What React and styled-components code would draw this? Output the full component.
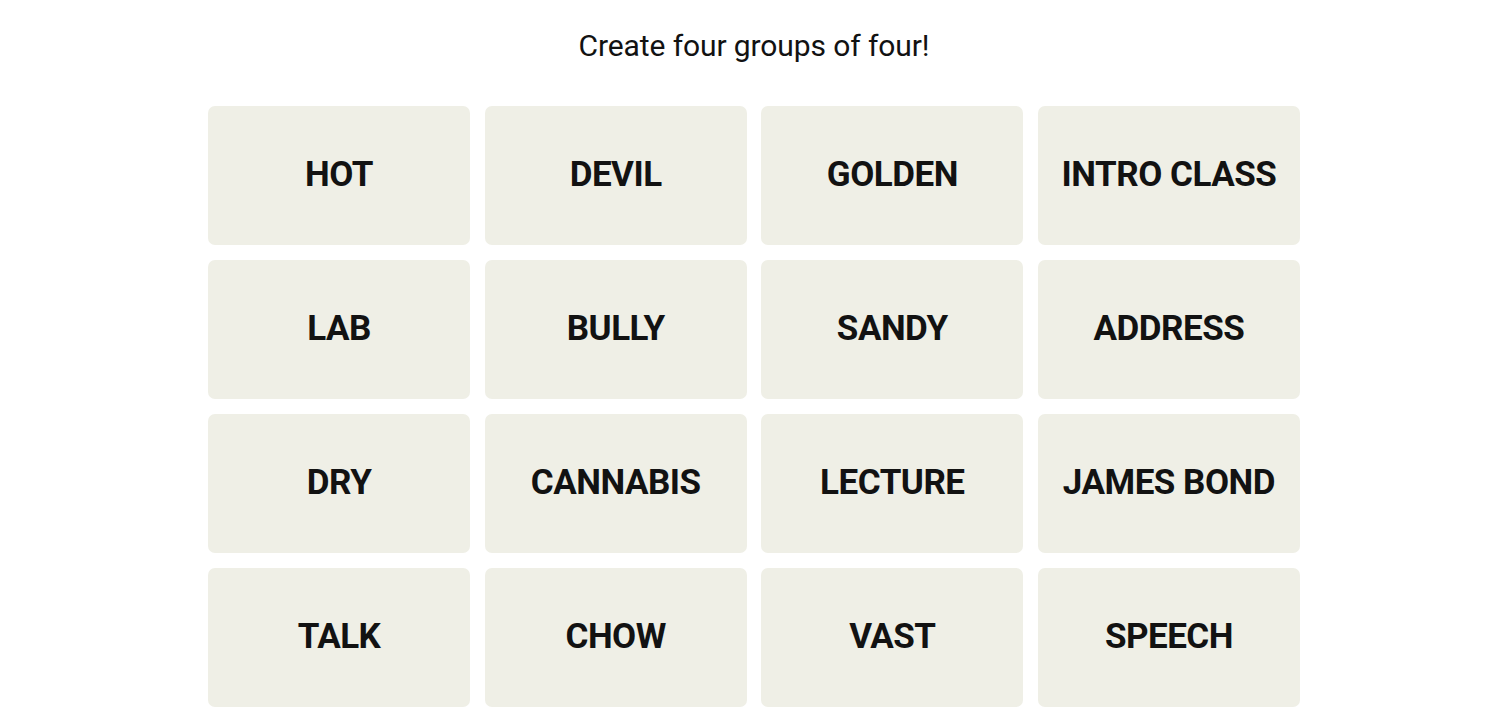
import styled, { createGlobalStyle } from 'styled-components';

const GlobalStyle = createGlobalStyle`
	body {
		margin: 0;
		background: #ffffff;
		font-family: 'Roboto', 'Liberation Sans', sans-serif;
	}
`;

const words = [
	'HOT', 'DEVIL', 'GOLDEN', 'INTRO CLASS',
	'LAB', 'BULLY', 'SANDY', 'ADDRESS',
	'DRY', 'CANNABIS', 'LECTURE', 'JAMES BOND',
	'TALK', 'CHOW', 'VAST', 'SPEECH',
];

const App = () => {
	return (
		<Page>
			<GlobalStyle />
			<Heading>Create four groups of four!</Heading>
			<Board>
				{words.map((w) => (
					<Tile key={w}>{w}</Tile>
				))}
			</Board>
		</Page>
	);
};

const Page = styled.div`
	display: flex;
	flex-direction: column;
	align-items: center;
	padding-left: 8px;
	padding-top: 28px;
`;

const Heading = styled.h2`
	margin: 0;
	font-family: 'Roboto', 'Liberation Sans', sans-serif;
	font-weight: 400;
	font-size: 30px;
	line-height: 36px;
	color: #121212;
	letter-spacing: -0.1px;
`;

const Board = styled.div`
	margin-top: 42px;
	width: 1092px;
	display: grid;
	grid-template-columns: repeat(4, 1fr);
	column-gap: 14.5px;
	row-gap: 15px;
`;

const Tile = styled.div`
	height: 139px;
	box-sizing: border-box;
	padding-bottom: 2px;
	background: #efefe6;
	border-radius: 7px;
	display: flex;
	align-items: center;
	justify-content: center;
	font-family: 'Roboto', 'Liberation Sans', sans-serif;
	font-weight: 700;
	font-size: 35px;
	letter-spacing: -0.5px;
	color: #121212;
`;

export default App;
